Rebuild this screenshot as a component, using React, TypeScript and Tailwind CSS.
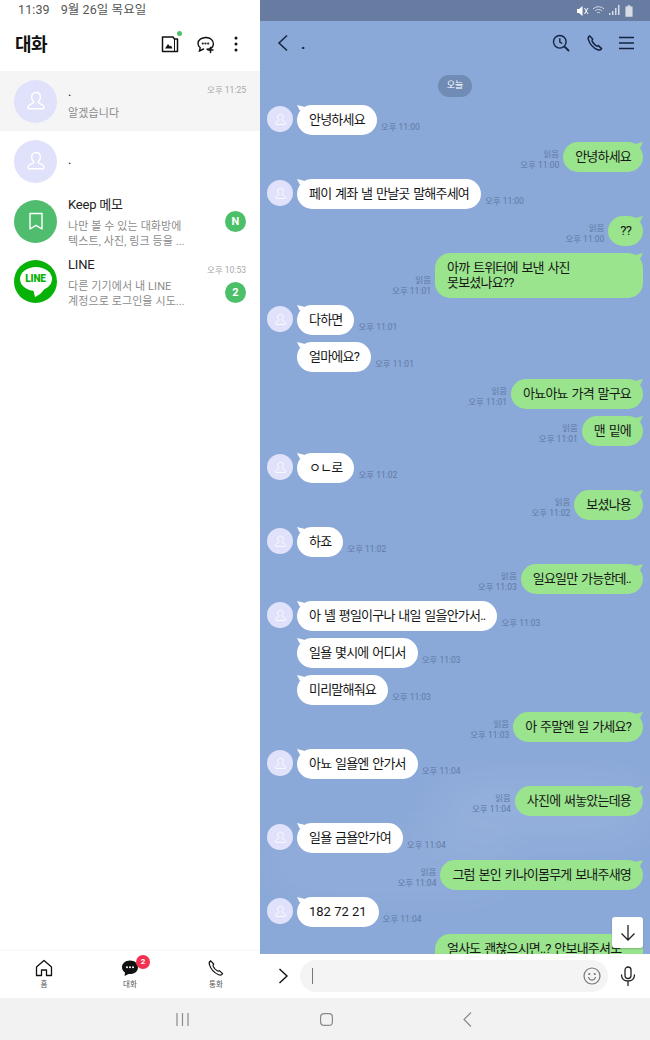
import React from "react";

type Msg = { side: "in" | "out"; text: string; time?: string; avatar?: boolean; two?: boolean; big?: boolean };

const msgs: Msg[] = [
  { side: "in", text: "안녕하세요", time: "오후 11:00", avatar: true },
  { side: "out", text: "안녕하세요", time: "오후 11:00" },
  { side: "in", text: "페이 계좌 낼 만날곳 말해주세여", time: "오후 11:00", avatar: true },
  { side: "out", text: "??", time: "오후 11:00" },
  { side: "out", text: "아까 트위터에 보낸 사진\n못보셨나요??", time: "오후 11:01", two: true },
  { side: "in", text: "다하면", time: "오후 11:01", avatar: true },
  { side: "in", text: "얼마에요?", time: "오후 11:01" },
  { side: "out", text: "아뇨아뇨 가격 말구요", time: "오후 11:01" },
  { side: "out", text: "맨 밑에", time: "오후 11:01" },
  { side: "in", text: "ㅇㄴ로", time: "오후 11:02", avatar: true },
  { side: "out", text: "보셨나용", time: "오후 11:02" },
  { side: "in", text: "하죠", time: "오후 11:02", avatar: true },
  { side: "out", text: "일요일만 가능한데..", time: "오후 11:03" },
  { side: "in", text: "아 녤 평일이구나 내일 일을안가서..", time: "오후 11:03", avatar: true },
  { side: "in", text: "일욜 몇시에 어디서", time: "오후 11:03" },
  { side: "in", text: "미리말해줘요", time: "오후 11:03" },
  { side: "out", text: "아 주말엔 일 가세요?", time: "오후 11:03" },
  { side: "in", text: "아뇨 일욜엔 안가서", time: "오후 11:04", avatar: true },
  { side: "out", text: "사진에 써놓았는데용", time: "오후 11:04" },
  { side: "in", text: "일욜 금욜안가여", time: "오후 11:04", avatar: true },
  { side: "out", text: "그럼 본인 키나이몸무게 보내주새영", time: "오후 11:04" },
  { side: "in", text: "182 72 21", time: "오후 11:04", avatar: true, big: true },
  { side: "out", text: "얼사도 괜찮으시면..? 안보내주셔도", two: true },
];

function Person({ size, stroke = "white" }: { size: number; stroke?: string }) {
  return (
    <svg width={size} height={size} viewBox="0 0 24 24" fill="none" stroke={stroke} strokeWidth="1.4" strokeLinejoin="round">
      <path d="M12 3.5c-2.7 0-4.4 2-4.4 4.6 0 1.9.9 3.4 1.9 4.4.3.4.3 1-.2 1.3l-3.6 2c-1.3.7-2 1.6-2 2.7 0 .8.6 1.3 1.4 1.3h13.8c.8 0 1.4-.5 1.4-1.3 0-1.1-.7-2-2-2.7l-3.6-2c-.5-.3-.5-.9-.2-1.3 1-1 1.9-2.5 1.9-4.4 0-2.6-1.7-4.6-4.4-4.6z" />
    </svg>
  );
}

function Avatar({ px }: { px: number }) {
  return (
    <div className="flex shrink-0 items-center justify-center rounded-full bg-[#e0e1fa]" style={{ width: px, height: px }}>
      <Person size={Math.round(px * 0.56)} />
    </div>
  );
}

function Bubble({ m }: { m: Msg }) {
  const incoming = m.side === "in";
  return (
    <div
      className={
        "relative whitespace-pre-line rounded-[15px] px-3 py-[7px] text-[13px] leading-[15px] text-[#161616] " +
        (m.big ? "tracking-normal " : "tracking-[-0.8px] [word-spacing:1.3px] ") +
        (incoming ? "h-[30px] bg-white" : "bg-[#9ae48d] ") +
        (!incoming && m.two ? "h-[45px] w-[208px]" : !incoming ? "h-[30px]" : "")
      }
    >
      {m.text}
      <svg
        width="10"
        height="8"
        viewBox="0 0 10 8"
        className={"absolute top-0 " + (incoming ? "left-0" : "right-0 -scale-x-100")}
      >
        <path d="M0 0 L8 2 L3 6 Z" fill={incoming ? "#ffffff" : "#9ae48d"} />
      </svg>
    </div>
  );
}

function Row({ m }: { m: Msg }) {
  if (m.side === "out") {
    return (
      <div className="flex shrink-0 items-end justify-end gap-1 pr-[7px]">
        {m.time ? (
          <div className="flex flex-col items-end pb-px text-[8.5px] leading-[11px] text-[#5f7aa5]">
            <span>읽음</span>
            <span>{m.time}</span>
          </div>
        ) : null}
        <Bubble m={m} />
      </div>
    );
  }
  return (
    <div className="flex shrink-0 items-start pl-[7px]">
      <div className="w-[30px] shrink-0 pt-px">{m.avatar ? <Avatar px={26} /> : null}</div>
      <Bubble m={m} />
      <span className="ml-[4px] self-end pb-[2px] text-[8.5px] leading-[11px] text-[#5f7aa5]">{m.time}</span>
    </div>
  );
}

function ChatItem({
  avatar,
  name,
  lines,
  time,
  badge,
  active,
}: {
  avatar: React.ReactNode;
  name: string;
  lines: string[];
  time?: string;
  badge?: string;
  active?: boolean;
}) {
  return (
    <div className={"flex h-[60px] shrink-0 items-center pl-[14px] pr-[14px] " + (active ? "bg-[#f5f5f5]" : "bg-white")}>
      {avatar}
      <div className="ml-[11px] mt-[2px] flex min-w-0 flex-1 flex-col gap-[5px]">
        <span className="text-[13px] leading-[18px] tracking-[-0.2px] text-[#222]">{name}</span>
        <div className="flex flex-col">
          {lines.map((l) => (
            <span key={l} className="whitespace-nowrap text-[11px] leading-[15px] tracking-[0.1px] text-[#8c8c8c]">
              {l}
            </span>
          ))}
        </div>
      </div>
      {time ? (
        <div className="flex h-full flex-col items-end gap-[6px] self-start pt-[14px]">
          <span className="text-[8.5px] leading-[11px] text-[#a8a8a8]">{time}</span>
          {badge ? (
            <span className="flex h-[21px] w-[21px] items-center justify-center rounded-full bg-[#4cc069] text-[11px] font-bold leading-none text-white">
              {badge}
            </span>
          ) : null}
        </div>
      ) : badge ? (
        <span className="flex h-[21px] w-[21px] items-center justify-center rounded-full bg-[#4cc069] text-[11px] font-bold leading-none text-white">
          {badge}
        </span>
      ) : null}
    </div>
  );
}

function NavItem({ icon, label, badge }: { icon: React.ReactNode; label: string; badge?: boolean }) {
  return (
    <div className="relative flex w-[60px] flex-col items-center">
      {icon}
      <span className="mt-[3px] text-[7.5px] leading-[10px] text-[#555]">{label}</span>
      {badge ? (
        <span className="absolute left-[36px] top-[-4px] flex h-[14px] w-[14px] items-center justify-center rounded-full bg-[#f4324f] text-[8px] font-bold leading-none text-white">
          2
        </span>
      ) : null}
    </div>
  );
}

export default function App() {
  return (
    <div className="flex h-[1040px] w-[650px] flex-col overflow-hidden bg-white [font-family:Roboto,'Noto_Sans_CJK_KR',sans-serif]">
      <div className="flex min-h-0 flex-1">
        {/* Left panel */}
        <div className="flex w-[260px] shrink-0 flex-col bg-white">
          <div className="flex h-[21px] shrink-0 items-center pl-[18px] text-[12.5px] tracking-[0.1px] text-[#555]">
            <span>11:39</span>
            <span className="ml-[11px]">9월 26일 목요일</span>
          </div>
          <div className="flex h-[50px] shrink-0 items-center pb-[4px] pl-[15px] pr-[14px]">
            <span className="flex-1 text-[18px] font-bold tracking-[-0.5px] text-[#111]">대화</span>
            <div className="relative mr-[17px]">
              <svg width="18" height="18" viewBox="0 0 18 18" fill="none" stroke="#111" strokeWidth="1.5" strokeLinejoin="round">
                <path d="M1.5 16.500V2h10.500l1.500 2h3v12.500z" />
                <path d="M13.500 4v12.500" strokeWidth="1" />
                <path d="M4 13.500l3-4.500 2 2.500 1-1 1.500 3z" fill="#111" stroke="none" />
              </svg>
              <span className="absolute right-[-3px] top-[-4px] h-[5px] w-[5px] rounded-full bg-[#4cc069]" />
            </div>
            <svg width="19" height="19" viewBox="0 0 19 19" fill="none" stroke="#111" strokeWidth="1.4" strokeLinecap="round" className="mr-[19px]">
              <path d="M10 2.5c-4.5 0-8 2.4-8 6 0 1.8.9 3.2 2.200 4.200L3.500 16l4-2" />
              <path d="M11 14.300c3.300-.3 6-2.200 6.400-5 .4-3.800-3-6.800-7.400-6.800" />
              <path d="M14.500 12.500v5M12 15h5" strokeWidth="1.500" />
              <circle cx="6.800" cy="8.500" r=".4" fill="#111" />
              <circle cx="9.500" cy="8.500" r=".4" fill="#111" />
              <circle cx="12.200" cy="8.500" r=".4" fill="#111" />
            </svg>
            <svg width="4" height="16" viewBox="0 0 4 16" fill="#111" className="mr-[8px]">
              <circle cx="2" cy="2" r="1.5" />
              <circle cx="2" cy="8" r="1.5" />
              <circle cx="2" cy="14" r="1.5" />
            </svg>
          </div>
          <ChatItem active avatar={<Avatar px={43} />} name="." lines={["알겠습니다"]} time="오후 11:25" />
          <ChatItem avatar={<Avatar px={43} />} name="." lines={[]} />
          <ChatItem
            avatar={
              <div className="flex h-[43px] w-[43px] shrink-0 items-center justify-center rounded-full bg-[#50bc6d]">
                <svg width="16" height="19" viewBox="0 0 16 19" fill="none" stroke="white" strokeWidth="1.4" strokeLinejoin="round">
                  <path d="M2 1.500h12v15.500l-6-3.600-6 3.600z" />
                </svg>
              </div>
            }
            name="Keep 메모"
            lines={["나만 볼 수 있는 대화방에", "텍스트, 사진, 링크 등을 ..."]}
            badge="N"
          />
          <ChatItem
            avatar={
              <div className="relative flex h-[43px] w-[43px] shrink-0 items-center justify-center rounded-full bg-[#06b206]">
                <svg width="36" height="34" viewBox="0 0 36 34" className="absolute left-[3.5px] top-[6px]">
                  <ellipse cx="18" cy="13" rx="16" ry="12" fill="white" />
                  <path d="M15 23l2 8c4-2 8-5 9-8z" fill="white" />
                </svg>
                <span className="relative mt-[-5px] text-[10px] font-black leading-none tracking-[-0.2px] text-[#06b206]">LINE</span>
              </div>
            }
            name="LINE"
            lines={["다른 기기에서 내 LINE", "계정으로 로그인을 시도..."]}
            time="오후 10:53"
            badge="2"
          />
          <div className="flex-1" />
          <div className="flex h-[47px] shrink-0 items-start justify-between bg-white pl-[14px] pr-[14px] pt-[8px] shadow-[0_-1px_2px_rgba(0,0,0,0.05)]">
            <NavItem
              label="홈"
              icon={
                <svg width="18" height="18" viewBox="0 0 18 18" fill="none" stroke="#111" strokeWidth="1.3" strokeLinejoin="round">
                  <path d="M1.500 16.500V8L9 1.500 16.500 8v8.500h-5v-5.500h-5v5.500z" />
                </svg>
              }
            />
            <NavItem
              label="대화"
              badge
              icon={
                <svg width="18" height="18" viewBox="0 0 18 18" className="ml-[-1px]">
                  <path d="M9 1.500c-4.600 0-8 2.900-8 6.700 0 2.200 1.200 4.100 3 5.300l-.4 3.500L7.500 15c.5.1 1 .1 1.500.1 4.600 0 8-3 8-6.900 0-3.800-3.400-6.700-8-6.700z" fill="#111" />
                  <circle cx="6" cy="8.300" r="1" fill="white" />
                  <circle cx="9" cy="8.300" r="1" fill="white" />
                  <circle cx="12" cy="8.300" r="1" fill="white" />
                </svg>
              }
            />
            <NavItem
              label="통화"
              icon={
                <svg width="18" height="18" viewBox="0 0 24 24" fill="none" stroke="#111" strokeWidth="1.6" strokeLinejoin="round">
                  <path d="M5 2.500c-1.800 1-2.500 2.800-1.800 5 1.800 5.600 7 11.300 12.300 13.500 2.200.9 4.100.4 5.300-1.500l-4.300-4c-.9.7-1.800.9-2.800.3-2.300-1.400-4.400-3.900-5.500-6.300-.4-1 0-1.800.8-2.500z" />
                </svg>
              }
            />
          </div>
        </div>

        {/* Right panel */}
        <div className="flex w-[390px] shrink-0 flex-col bg-white">
          <div className="flex h-[21px] shrink-0 items-center justify-end gap-[3px] bg-[#677ca0] pr-[17px]">
            <svg width="13" height="12" viewBox="0 0 13 12" fill="white">
              <path d="M1 4h2l3.500-3v10L3 8H1z" />
              <path d="M8.500 3l3.500 6M12 3L8.500 9" stroke="white" strokeWidth="1" />
            </svg>
            <svg width="14" height="11" viewBox="0 0 14 11" fill="none" stroke="#d5dce8" strokeWidth="1">
              <path d="M1 4c3-3 8-3 11 0M3 6c2-2 5-2 7 0M5 8c1-1 2-1 3 0" />
            </svg>
            <svg width="11" height="11" viewBox="0 0 11 11" fill="#d5dce8">
              <rect x="0" y="8" width="1.500" height="2" />
              <rect x="3" y="6" width="1.500" height="4" />
              <rect x="6" y="3" width="1.500" height="7" />
              <rect x="9" y="0" width="1.500" height="10" />
            </svg>
            <svg width="8" height="12" viewBox="0 0 9 13" fill="#d6dbe4" className="ml-[2px]">
              <path d="M3 0h3v1.500h2.500V13H.5V1.500H3z" />
            </svg>
          </div>
          <div className="relative flex min-h-0 flex-1 flex-col overflow-hidden bg-[#8aa8d8]">
            <div className="absolute left-[170px] top-[760px] h-[60px] w-[220px] rounded-full bg-white/10 blur-xl" />
            <div className="absolute left-0 top-[810px] h-[70px] w-[260px] rounded-full bg-white/5 blur-xl" />
            <div className="relative flex h-[43px] shrink-0 items-center pl-[16px] pr-[16px]">
              <svg width="14" height="18" viewBox="0 0 14 18" fill="none" stroke="#14233f" strokeWidth="1.500">
                <path d="M11 1.500L3 9l8 7.500" />
              </svg>
              <span className="ml-[11px] mt-[3px] flex-1 text-[15px] font-bold leading-none text-[#14233f]">.</span>
              <svg width="18" height="18" viewBox="0 0 18 18" fill="none" stroke="#14233f" strokeWidth="1.400" className="mr-[16px]">
                <circle cx="7.800" cy="7.800" r="6.300" />
                <path d="M12.300 12.300L17 17" strokeWidth="1.800" />
                <path d="M7.800 4.300v3.700l2.500 1.500" />
              </svg>
              <svg width="18" height="18" viewBox="0 0 24 24" fill="none" stroke="#14233f" strokeWidth="2" strokeLinejoin="round" className="mr-[15px]">
                <path d="M5 2.500c-1.800 1-2.500 2.800-1.800 5 1.800 5.600 7 11.300 12.300 13.500 2.200.9 4.100.4 5.300-1.500l-4.300-4c-.9.7-1.800.9-2.800.3-2.300-1.400-4.400-3.900-5.500-6.300-.4-1 0-1.800.8-2.500z" />
              </svg>
              <svg width="15" height="14" viewBox="0 0 15 14" fill="none" stroke="#14233f" strokeWidth="1.500">
                <path d="M0 1.500h15M0 7h15M0 12.500h15" />
              </svg>
            </div>
            <div className="relative flex shrink-0 justify-center pb-[8px] pt-[11px]">
              <span className="flex h-[22px] w-[34px] items-center justify-center rounded-[11px] bg-[#718cb4] text-[9px] text-white">오늘</span>
            </div>
            <div className="relative flex flex-col gap-[7px]">
              {msgs.map((m, i) => (
                <Row key={i} m={m} />
              ))}
            </div>
            <div className="absolute bottom-[6px] right-[7px] flex h-[31px] w-[31px] items-center justify-center rounded-[3px] bg-white shadow-[0_1px_2px_rgba(0,0,0,0.2)]">
              <svg width="16" height="17" viewBox="0 0 16 17" fill="none" stroke="#222" strokeWidth="1.300">
                <path d="M8 1v15M1.500 9.500L8 16l6.500-6.500" />
              </svg>
            </div>
          </div>
          <div className="flex h-[44px] shrink-0 items-center bg-white pl-[18px] pr-[14px]">
            <svg width="11" height="16" viewBox="0 0 11 16" fill="none" stroke="#111" strokeWidth="1.400">
              <path d="M1.500 1l7.500 7-7.500 7" />
            </svg>
            <div className="ml-[11px] flex h-[32px] flex-1 items-center justify-between rounded-[16px] bg-[#f4f4f4] pl-[12px] pr-[7px]">
              <span className="h-[16px] w-px bg-[#777]" />
              <svg width="18" height="18" viewBox="0 0 18 18" fill="none" stroke="#777" strokeWidth="1.200" strokeLinecap="round">
                <circle cx="9" cy="9" r="8" />
                <path d="M5.500 10.500c.8 1.800 2.200 2.600 3.500 2.600s2.700-.8 3.500-2.600" />
                <circle cx="6.300" cy="7" r=".5" fill="#777" />
                <circle cx="11.700" cy="7" r=".5" fill="#777" />
              </svg>
            </div>
            <svg width="16" height="20" viewBox="0 0 16 20" fill="none" stroke="#222" strokeWidth="1.300" strokeLinecap="round" className="ml-[12px]">
              <rect x="5" y="1" width="6" height="11.500" rx="3" />
              <path d="M1.500 9c0 3.800 2.800 6 6.500 6s6.500-2.200 6.500-6M8 15v4.500" />
            </svg>
          </div>
        </div>
      </div>

      {/* System nav */}
      <div className="relative flex h-[42px] shrink-0 items-center justify-between bg-[#f2f2f2] pl-[176px] pr-[178px]">
        <svg width="13" height="13" viewBox="0 0 13 13" stroke="#8a8a8a" strokeWidth="1.200">
          <path d="M1 0v13M6.500 0v13M12 0v13" />
        </svg>
        <svg width="13" height="13" viewBox="0 0 13 13" fill="none" stroke="#8a8a8a" strokeWidth="1.200">
          <rect x=".6" y=".6" width="11.800" height="11.800" rx="3.500" />
        </svg>
        <svg width="9" height="15" viewBox="0 0 9 15" fill="none" stroke="#8a8a8a" strokeWidth="1.200">
          <path d="M8 .5L1 7.500l7 7" />
        </svg>
      </div>
    </div>
  );
}
